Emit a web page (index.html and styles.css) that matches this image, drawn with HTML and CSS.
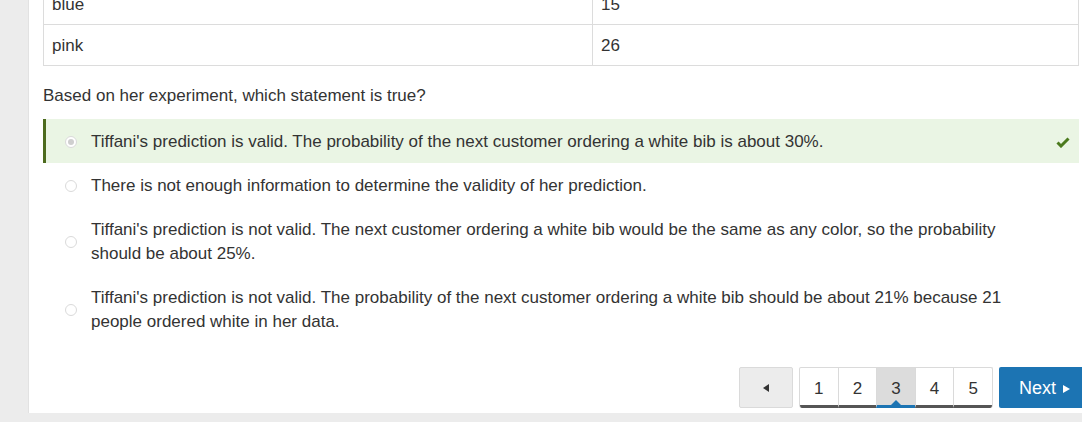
FILE: index.html
```html
<!DOCTYPE html>
<html lang="en">
<head>
    <meta charset="UTF-8">
    <title>Question 3</title>
    <link rel="stylesheet" href="styles.css">
</head>
<body>
    <div class="panel">
        <table class="data-table">
            <tbody>
                <tr>
                    <td class="col-color">blue</td>
                    <td>15</td>
                </tr>
                <tr>
                    <td class="col-color">pink</td>
                    <td>26</td>
                </tr>
            </tbody>
        </table>

        <p class="question">Based on her experiment, which statement is true?</p>

        <div class="options">
            <div class="option option-correct">
                <span class="radio radio-checked"></span>
                <span class="option-text">Tiffani's prediction is valid. The probability of the next customer ordering a white bib is about 30%.</span>
                <svg class="check" width="14" height="11" viewBox="0 0 14 11">
                    <path d="M1.5 5.5 L5 9 L12.5 1.5" fill="none" stroke="#4b7a1d" stroke-width="3"/>
                </svg>
            </div>
            <div class="option">
                <span class="radio"></span>
                <span class="option-text">There is not enough information to determine the validity of her prediction.</span>
            </div>
            <div class="option">
                <span class="radio"></span>
                <span class="option-text">Tiffani's prediction is not valid. The next customer ordering a white bib would be the same as any color, so the probability should be about 25%.</span>
            </div>
            <div class="option">
                <span class="radio"></span>
                <span class="option-text">Tiffani's prediction is not valid. The probability of the next customer ordering a white bib should be about 21% because 21 people ordered white in her data.</span>
            </div>
        </div>

        <div class="pager">
            <button class="btn-prev"><span class="arrow-left"></span></button>
            <div class="pages">
                <span class="page">1</span>
                <span class="page">2</span>
                <span class="page page-active">3</span>
                <span class="page">4</span>
                <span class="page">5</span>
            </div>
            <button class="btn-next">Next<span class="arrow-right"></span></button>
        </div>
    </div>
</body>
</html>
```

FILE: styles.css
```css
* {
    box-sizing: border-box;
    margin: 0;
    padding: 0;
}

body {
    font-family: "Liberation Sans", Arial, sans-serif;
    font-size: 17px;
    line-height: 24px;
    color: #333;
    background-color: #ececec;
    overflow: hidden;
    height: 422px;
}

.panel {
    margin-left: 28px;
    background-color: white;
    padding: 0 3px 5px 14px;
    border-left: 1px solid #e2e2e2;
}

.data-table {
    width: 100%;
    border-collapse: collapse;
    margin-top: -17px;
}

.data-table td {
    border: 1px solid #dcdcdc;
    padding: 9px 8px 7px;
}

.col-color {
    width: 549px;
}

.question {
    margin: 18px 0 11px;
}

.option {
    display: flex;
    align-items: center;
    padding: 11px 9px 9px 19px;
    border-left: 3px solid transparent;
}

.option-correct {
    background-color: #eaf5e4;
    border-left-color: #4d6b1e;
}

.radio {
    flex: none;
    width: 12px;
    height: 12px;
    border: 1px solid #dadada;
    border-radius: 50%;
    background-color: white;
    margin-right: 14px;
    position: relative;
}

.radio-checked::after {
    content: "";
    position: absolute;
    left: 2px;
    top: 2px;
    width: 6px;
    height: 6px;
    border-radius: 50%;
    background-color: #cfcfcf;
}

.option-text {
    flex: 1;
    margin-right: 40px;
}

.check {
    flex: none;
    margin-left: auto;
}

.pager {
    display: flex;
    justify-content: flex-end;
    gap: 6px;
    margin-top: 24px;
    margin-right: -16px;
    height: 41px;
}

.btn-prev {
    width: 54px;
    display: flex;
    align-items: center;
    justify-content: center;
    background-color: #ececec;
    border: 1px solid #dadada;
    border-radius: 2px;
}

.arrow-left {
    border-top: 4px solid transparent;
    border-bottom: 4px solid transparent;
    border-right: 6px solid #333;
}

.pages {
    display: flex;
    width: 194px;
    border: 1px solid #dadada;
    border-bottom: none;
    border-radius: 2px 2px 3px 3px;
    overflow: hidden;
}

.page {
    flex: 1;
    display: flex;
    align-items: center;
    justify-content: center;
    font-size: 17px;
    border-left: 1px solid #dadada;
    border-bottom: 3px solid #555;
    padding-top: 4px;
    position: relative;
}

.page:first-child {
    border-left: none;
}

.page-active {
    background-color: #dcdcdc;
    border-bottom-color: #1c74b3;
}

.page-active::after {
    content: "";
    position: absolute;
    left: 50%;
    bottom: 0;
    margin-left: -5px;
    border-left: 5px solid transparent;
    border-right: 5px solid transparent;
    border-bottom: 5px solid #1c74b3;
}

.btn-next {
    width: 96px;
    display: flex;
    align-items: center;
    padding: 2px 0 0 20px;
    background-color: #1c74b3;
    color: white;
    border: none;
    border-radius: 2px 0 0 2px;
    font-family: inherit;
    font-size: 18px;
}

.arrow-right {
    margin-left: 7px;
    border-top: 4px solid transparent;
    border-bottom: 4px solid transparent;
    border-left: 7px solid white;
}
```
